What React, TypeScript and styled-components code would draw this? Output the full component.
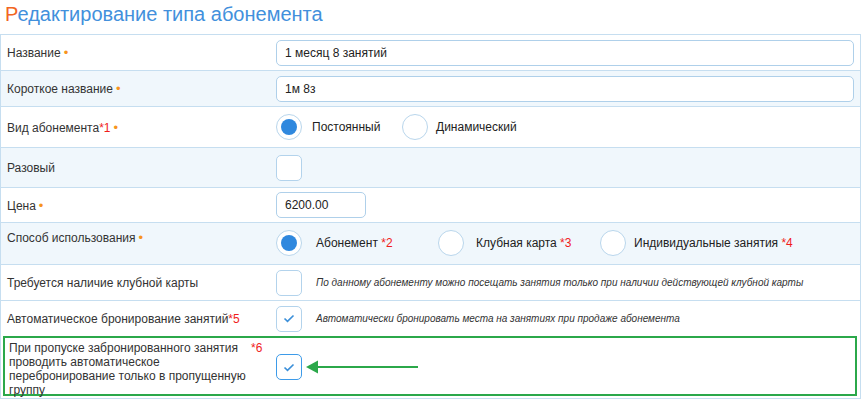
import React from "react";
import styled, { createGlobalStyle } from "styled-components";

const GlobalStyle = createGlobalStyle`
  html, body { margin: 0; padding: 0; background: #fff; }
  body { font-family: "Liberation Sans", Arial, sans-serif; color: #333; }
`;

const Page = styled.div`
  width: 861px;
  height: 399px;
  overflow: hidden;
`;

const Title = styled.h1`
  margin: 0;
  height: 34px;
  padding: 2px 0 0 5px;
  box-sizing: border-box;
  font-size: 20px;
  line-height: 24px;
  font-weight: normal;
  color: #4290dc;
`;

const TitleFirst = styled.span`
  color: #f26522;
`;

const Table = styled.div`
  border: 1px solid #c6def0;
  width: 861px;
  box-sizing: border-box;
`;

const Row = styled.div<{ $h: number; $alt?: boolean; $top?: boolean }>`
  display: grid;
  grid-template-columns: 275px 1fr;
  align-items: ${(p) => (p.$top ? "start" : "center")};
  height: ${(p) => p.$h}px;
  background: ${(p) => (p.$alt ? "#f0f7fc" : "#fff")};
  border-top: 1px solid #c6def0;
  box-sizing: border-box;
  &:first-child { border-top: none; }
`;

const Label = styled.div<{ $pt?: number }>`
  padding: ${(p) => p.$pt ?? 0}px 0 0 6px;
  font-size: 12px;
  color: #333;
`;

const Dot = styled.span`
  color: #f7941d;
  font-size: 13px;
  margin-left: 3px;
`;

const Req = styled.span`
  color: #f01c1c;
`;

const Value = styled.div<{ $pt?: number }>`
  display: flex;
  align-items: center;
  padding-top: ${(p) => p.$pt ?? 0}px;
`;

const TextInput = styled.div<{ $w?: number }>`
  width: ${(p) => (p.$w ? `${p.$w}px` : "578px")};
  height: 26px;
  box-sizing: border-box;
  border: 1px solid #afd0ea;
  border-radius: 5px;
  background: #fff;
  padding-left: 8px;
  display: flex;
  align-items: center;
  font-size: 12px;
  color: #222;
`;

const Option = styled.div<{ $w: number; $gap: number }>`
  width: ${(p) => p.$w}px;
  display: flex;
  align-items: center;
  gap: ${(p) => p.$gap}px;
  font-size: 12px;
  color: #222;
  flex: none;
`;

const RadioCircle = styled.span<{ $on?: boolean }>`
  width: 26px;
  height: 26px;
  box-sizing: border-box;
  border: 1px solid #b9d6ec;
  border-radius: 50%;
  background: #fff;
  display: flex;
  align-items: center;
  justify-content: center;
  flex: none;
  &::after {
    content: "";
    width: 16px;
    height: 16px;
    border-radius: 50%;
    background: ${(p) => (p.$on ? "#2f88de" : "transparent")};
  }
`;

const Check = styled.span<{ $focus?: boolean }>`
  width: 26px;
  height: 26px;
  box-sizing: border-box;
  border: 1px solid ${(p) => (p.$focus ? "#3d9be9" : "#b3d3ec")};
  border-radius: 5px;
  background: #fff;
  display: flex;
  align-items: center;
  justify-content: center;
  flex: none;
`;

const Hint = styled.span`
  margin-left: 14px;
  font-size: 10px;
  font-style: italic;
  color: #333;
`;

const LastRow = styled.div`
  padding: 0 3px 2px 2px;
`;

const GreenBox = styled.div`
  border: 2px solid #2ba84a;
  height: 60px;
  box-sizing: border-box;
  display: grid;
  grid-template-columns: 271px 1fr;
`;

const MultiLabel = styled.div`
  display: flex;
  padding: 3px 0 0 4px;
  font-size: 12px;
  line-height: 14px;
  color: #333;
`;

const MultiText = styled.span`
  width: 242px;
`;

const MultiReq = styled.span`
  color: #f01c1c;
`;

const ArrowWrap = styled.div`
  display: flex;
  align-items: center;
  padding-top: 16px;
  align-self: start;
`;

const Tick = ({ c = "#3b8fd9" }: { c?: string }) => (
  <svg width="12" height="9" viewBox="0 0 12 9">
    <path d="M1.5 4.5 L4.5 7.3 L10.5 1.5" fill="none" stroke={c} strokeWidth="1.6" />
  </svg>
);

const Arrow = () => (
  <svg width="112" height="16" viewBox="0 0 112 16" style={{ marginLeft: 4 }}>
    <path d="M0 8 L12 1.5 L12 14.5 Z" fill="#2ba84a" />
    <rect x="10" y="7" width="102" height="2" fill="#2ba84a" />
  </svg>
);

export default function App() {
  return (
    <Page>
      <GlobalStyle />
      <Title>
        <TitleFirst>Р</TitleFirst>едактирование типа абонемента
      </Title>
      <Table>
        <Row $h={35}>
          <Label>Название<Dot>•</Dot></Label>
          <Value><TextInput>1 месяц 8 занятий</TextInput></Value>
        </Row>
        <Row $h={36} $alt>
          <Label>Короткое название<Dot>•</Dot></Label>
          <Value><TextInput>1м 8з</TextInput></Value>
        </Row>
        <Row $h={41}>
          <Label>Вид абонемента<Req>*1</Req><Dot>•</Dot></Label>
          <Value>
            <Option $w={126} $gap={10}><RadioCircle $on />Постоянный</Option>
            <Option $w={126} $gap={8}><RadioCircle />Динамический</Option>
          </Value>
        </Row>
        <Row $h={40} $alt>
          <Label>Разовый</Label>
          <Value><Check /></Value>
        </Row>
        <Row $h={35}>
          <Label>Цена<Dot>•</Dot></Label>
          <Value><TextInput $w={90}>6200.00</TextInput></Value>
        </Row>
        <Row $h={42} $alt $top>
          <Label $pt={7}>Способ использования<Dot>•</Dot></Label>
          <Value $pt={7}>
            <Option $w={162} $gap={14}><RadioCircle $on /><span>Абонемент <Req>*2</Req></span></Option>
            <Option $w={162} $gap={12}><RadioCircle /><span>Клубная карта <Req>*3</Req></span></Option>
            <Option $w={200} $gap={8}><RadioCircle /><span>Индивидуальные занятия <Req>*4</Req></span></Option>
          </Value>
        </Row>
        <Row $h={36}>
          <Label>Требуется наличие клубной карты</Label>
          <Value>
            <Check />
            <Hint>По данному абонементу можно посещать занятия только при наличии действующей клубной карты</Hint>
          </Value>
        </Row>
        <Row $h={36}>
          <Label>Автоматическое бронирование занятий<Req>*5</Req></Label>
          <Value>
            <Check><Tick /></Check>
            <Hint>Автоматически бронировать места на занятиях при продаже абонемента</Hint>
          </Value>
        </Row>
        <LastRow>
          <GreenBox>
            <MultiLabel>
              <MultiText>
                При пропуске забронированного занятия проводить автоматическое перебронирование только в пропущенную группу
              </MultiText>
              <MultiReq>*6</MultiReq>
            </MultiLabel>
            <ArrowWrap>
              <Check $focus><Tick /></Check>
              <Arrow />
            </ArrowWrap>
          </GreenBox>
        </LastRow>
      </Table>
    </Page>
  );
}
